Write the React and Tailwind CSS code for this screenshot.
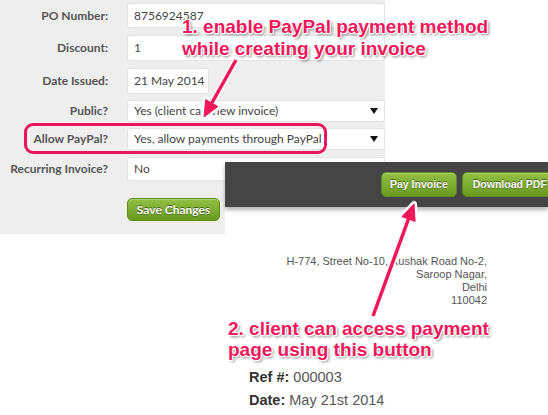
const lato = 'font-[Lato,sans-serif]'
const arial = "font-['Liberation_Sans',Arial,sans-serif]"
const pink = 'text-[#f0175b]'
const halo =
  '[text-shadow:1px_0_0_#fff,-1px_0_0_#fff,0_1px_0_#fff,0_-1px_0_#fff,1px_1px_0_#fff,-1px_-1px_0_#fff,2px_2px_3px_rgba(0,0,0,0.5)]'

function Row({ label, className, children }) {
  return (
    <div className={`grid grid-cols-[108px_1fr] gap-x-[19px] items-center ${className}`}>
      <span className={`${lato} text-right font-bold text-[12px] text-[#555] whitespace-nowrap`}>{label}</span>
      {children}
    </div>
  )
}

function Field({ value, className = '' }) {
  return (
    <div className={`bg-white border border-[#e3e3e3] rounded-[3px] flex items-center pl-[6px] ${lato} text-[12px] text-[#444] ${className}`}>
      {value}
    </div>
  )
}

function Select({ value, className = '' }) {
  return (
    <div className={`bg-white border border-[#e3e3e3] rounded-[3px] flex items-center justify-between pl-[6px] pr-[6px] ${lato} text-[12px] text-[#444] ${className}`}>
      <span>{value}</span>
      <svg width="8" height="6" viewBox="0 0 8 6"><path d="M0 0h8L4 6z" fill="#111" /></svg>
    </div>
  )
}

function GreenButton({ children, className = '' }) {
  return (
    <div
      className={`flex items-center rounded-[5px] border border-[#5f8c1e] bg-gradient-to-b from-[#93c043] to-[#689a1e] text-white font-bold [text-shadow:0_-1px_0_rgba(0,0,0,0.45),0_1px_1px_rgba(0,0,0,0.3)] shadow-[inset_0_1px_0_rgba(255,255,255,0.25)] ${className}`}
    >
      {children}
    </div>
  )
}

export default function App() {
  return (
    <div className="relative w-[548px] h-[415px] bg-white overflow-hidden">
      {/* invoice form */}
      <div className="w-[385px] h-[234px] bg-[#eeeeee] pt-[3px] flex flex-col">
        <Row label="PO Number:">
          <Field value="8756924587" className="h-[25px]" />
        </Row>
        <Row label="Discount:" className="mt-[7px]">
          <Field value="1" className="h-[26px]" />
        </Row>
        <Row label="Date Issued:" className="mt-[7px]">
          <Field value="21 May 2014" className="h-[26px] w-[82px]" />
        </Row>
        <Row label="Public?" className="mt-[6px]">
          <Select value="Yes (client can view invoice)" className="h-[22px]" />
        </Row>
        <Row label="Allow PayPal?" className="mt-[6px]">
          <Select value="Yes, allow payments through PayPal" className="h-[22px]" />
        </Row>
        <Row label="Recurring Invoice?" className="mt-[7px]">
          <Select value="No" className="h-[24px]" />
        </Row>
        <div className="pl-[127px] mt-[17px]">
          <GreenButton className={`w-[93px] h-[23px] justify-center ${lato} text-[12px]`}>Save Changes</GreenButton>
        </div>
      </div>

      {/* highlight round Allow PayPal */}
      <div className="absolute left-[24px] top-[123px] w-[303px] h-[31px] border-[3px] border-[#e8175d] rounded-[9px]" />

      {/* invoice view */}
      <div className="absolute left-[225px] top-[162px] w-[323px] h-[253px] bg-white flex flex-col">
        <div className="h-[45px] bg-[#454545] shadow-[0_3px_4px_rgba(0,0,0,0.3)] flex items-center gap-[5px] pl-[156px] overflow-hidden">
          <GreenButton className={`shrink-0 h-[25px] px-[8px] ${arial} text-[10.5px]`}>Pay Invoice</GreenButton>
          <GreenButton className={`shrink-0 h-[25px] px-[10px] w-[100px] ${arial} text-[10.5px]`}>Download PDF</GreenButton>
        </div>
        <div className={`mt-[48px] pr-[61px] text-right ${arial} text-[11px] leading-[13px] text-[#555]`}>
          <p>H-774, Street No-10, Kushak Road No-2,</p>
          <p>Saroop Nagar,</p>
          <p>Delhi</p>
          <p>110042</p>
        </div>
        <div className={`mt-[59px] pl-[24px] ${arial} text-[14.5px] leading-[23px] text-[#555]`}>
          <p><span className="font-bold text-[#333]">Ref #:</span> 000003</p>
          <p><span className="font-bold text-[#333]">Date:</span> May 21st 2014</p>
        </div>
      </div>

      {/* annotations */}
      <div className={`absolute left-[182px] top-[16px] ${arial} font-bold text-[19px] leading-[22px] ${pink} ${halo} whitespace-nowrap`}>
        <p>1. enable PayPal payment method</p>
        <p>while creating your invoice</p>
      </div>
      <div className={`absolute left-[228px] top-[318px] ${arial} font-bold text-[19px] leading-[21px] ${pink} ${halo} whitespace-nowrap`}>
        <p>2. client can access payment</p>
        <p>page using this button</p>
      </div>

      <svg className="absolute inset-0 pointer-events-none" width="548" height="415" viewBox="0 0 548 415">
        <g stroke="#fff" strokeWidth="6" strokeLinejoin="round" fill="#fff">
          <path d="M236 60L211.8 103" />
          <path d="M204 117L217.9 106.5L205.7 99.6z" />
          <path d="M373 316L408.5 219" />
          <path d="M414 204L415.1 221.4L401.9 216.6z" />
        </g>
        <g stroke="#f0175b" strokeWidth="3.5" fill="#f0175b">
          <path d="M236 60L211.8 103" />
          <path d="M204 117L217.9 106.5L205.7 99.6z" strokeWidth="1" />
          <path d="M373 316L408.5 219" />
          <path d="M414 204L415.1 221.4L401.9 216.6z" strokeWidth="1" />
        </g>
      </svg>
    </div>
  )
}
